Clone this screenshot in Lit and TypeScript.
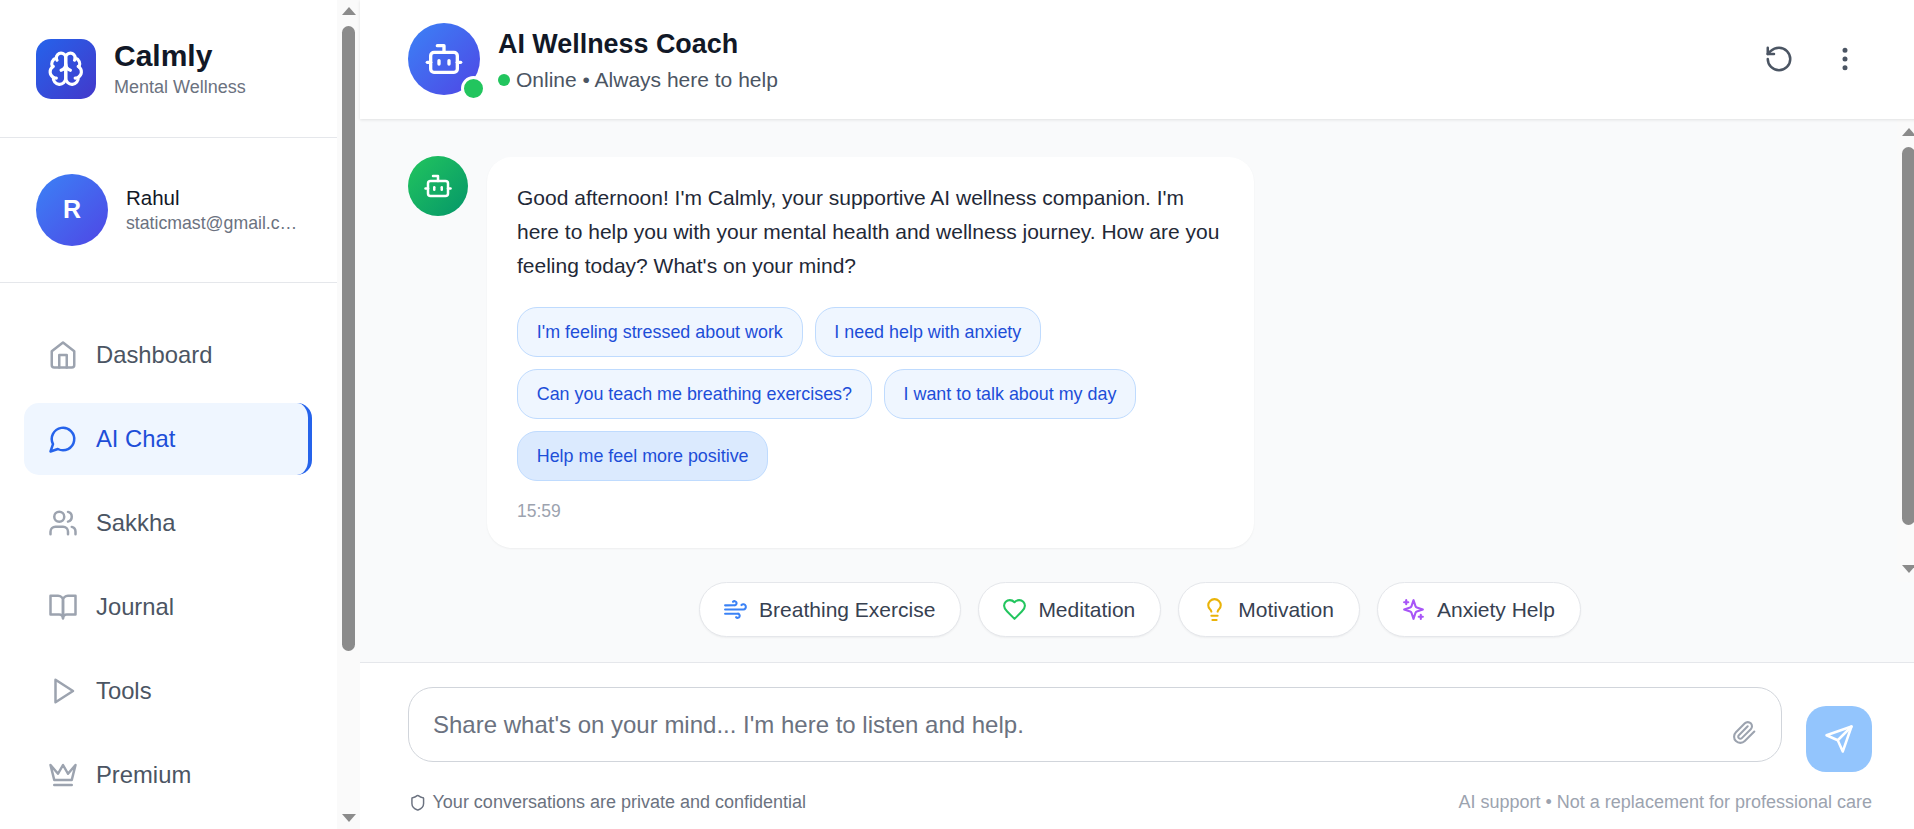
import { LitElement, html, css, svg } from "lit";
import { customElement, property } from "lit/decorators.js";

const ICONS: Record<string, any> = {
  brain: svg`<path d="M12 5a3 3 0 1 0-5.997.125 4 4 0 0 0-2.526 5.77 4 4 0 0 0 .556 6.588A4 4 0 1 0 12 18Z"/><path d="M12 5a3 3 0 1 1 5.997.125 4 4 0 0 1 2.526 5.77 4 4 0 0 1-.556 6.588A4 4 0 1 1 12 18Z"/><path d="M15 13a4.5 4.5 0 0 1-3-4 4.5 4.5 0 0 1-3 4"/><path d="M17.599 6.5a3 3 0 0 0 .399-1.375"/><path d="M6.003 5.125A3 3 0 0 0 6.401 6.5"/><path d="M3.477 10.896a4 4 0 0 1 .585-.396"/><path d="M19.938 10.5a4 4 0 0 1 .585.396"/><path d="M6 18a4 4 0 0 1-1.967-.516"/><path d="M19.967 17.484A4 4 0 0 1 18 18"/>`,
  bot: svg`<path d="M12 8V4H8"/><rect width="16" height="12" x="4" y="8" rx="2"/><path d="M2 14h2"/><path d="M20 14h2"/><path d="M15 13v2"/><path d="M9 13v2"/>`,
  home: svg`<path d="m3 9 9-7 9 7v11a2 2 0 0 1-2 2H5a2 2 0 0 1-2-2z"/><polyline points="9 22 9 12 15 12 15 22"/>`,
  chat: svg`<path d="M7.9 20A9 9 0 1 0 4 16.1L2 22Z"/>`,
  users: svg`<path d="M16 21v-2a4 4 0 0 0-4-4H6a4 4 0 0 0-4 4v2"/><circle cx="9" cy="7" r="4"/><path d="M22 21v-2a4 4 0 0 0-3-3.87"/><path d="M16 3.13a4 4 0 0 1 0 7.75"/>`,
  book: svg`<path d="M2 3h6a4 4 0 0 1 4 4v14a3 3 0 0 0-3-3H2z"/><path d="M22 3h-6a4 4 0 0 0-4 4v14a3 3 0 0 1 3-3h7z"/>`,
  play: svg`<polygon points="6 3 20 12 6 21 6 3"/>`,
  crown: svg`<path d="m2 4 3 12h14l3-12-6 7-4-7-4 7-6-7zm3 16h14"/>`,
  rotate: svg`<path d="M3 12a9 9 0 1 0 9-9 9.75 9.75 0 0 0-6.74 2.74L3 8"/><path d="M3 3v5h5"/>`,
  more: svg`<circle cx="12" cy="12" r="1"/><circle cx="12" cy="5" r="1"/><circle cx="12" cy="19" r="1"/>`,
  wind: svg`<path d="M17.7 7.7a2.5 2.5 0 1 1 1.8 4.3H2"/><path d="M9.6 4.6A2 2 0 1 1 11 8H2"/><path d="M12.6 19.4A2 2 0 1 0 14 16H2"/>`,
  heart: svg`<path d="M19 14c1.49-1.46 3-3.21 3-5.5A5.5 5.5 0 0 0 16.5 3c-1.76 0-3 .5-4.5 2-1.5-1.5-2.74-2-4.5-2A5.5 5.5 0 0 0 2 8.5c0 2.3 1.5 4.05 3 5.5l7 7Z"/>`,
  bulb: svg`<path d="M15 14c.2-1 .7-1.7 1.5-2.5 1-.9 1.5-2.2 1.5-3.5A6 6 0 0 0 6 8c0 1 .2 2.2 1.5 3.5.7.7 1.3 1.5 1.5 2.5"/><path d="M9 18h6"/><path d="M10 22h4"/>`,
  sparkles: svg`<path d="m12 3-1.912 5.813a2 2 0 0 1-1.275 1.275L3 12l5.813 1.912a2 2 0 0 1 1.275 1.275L12 21l1.912-5.813a2 2 0 0 1 1.275-1.275L21 12l-5.813-1.912a2 2 0 0 1-1.275-1.275L12 3Z"/><path d="M5 3v4"/><path d="M19 17v4"/><path d="M3 5h4"/><path d="M17 19h4"/>`,
  clip: svg`<path d="m21.44 11.05-9.19 9.19a6 6 0 0 1-8.49-8.49l8.57-8.57A4 4 0 1 1 18 8.84l-8.59 8.57a2 2 0 0 1-2.83-2.83l8.49-8.48"/>`,
  send: svg`<path d="m22 2-7 20-4-9-9-4Z"/><path d="M22 2 11 13"/>`,
  shield: svg`<path d="M20 13c0 5-3.5 7.5-7.66 8.95a1 1 0 0 1-.67-.01C7.5 20.5 4 18 4 13V6a1 1 0 0 1 1-1c2 0 4.5-1.2 6.24-2.72a1.17 1.17 0 0 1 1.52 0C14.51 3.81 17 5 19 5a1 1 0 0 1 1 1z"/>`,
};

const icon = (name: string, cls = "") => html`<svg class="ic ${cls}" viewBox="0 0 24 24" fill="none" stroke="currentColor" stroke-width="2" stroke-linecap="round" stroke-linejoin="round">${ICONS[name]}</svg>`;

@customElement("fake-scrollbar")
class FakeScrollbar extends LitElement {
  @property({ type: Number }) thumb = 100;
  @property({ type: Number }) top = 7;
  @property({ type: Number }) gap = 11;
  static styles = css`
    :host { display: flex; flex-direction: column; align-items: center; width: 23px; flex: none; background: #fafafa; box-sizing: border-box; }
    .up { width: 0; height: 0; border-left: 7.5px solid transparent; border-right: 7.5px solid transparent; border-bottom: 8px solid #8b8b8b; }
    .down { width: 0; height: 0; border-left: 7.5px solid transparent; border-right: 7.5px solid transparent; border-top: 8px solid #8b8b8b; margin-top: auto; }
    .thumb { width: 13px; background: #8b8b8b; border-radius: 7px; }
  `;
  render() {
    return html`
      <div class="up" style="margin-top:${this.top}px"></div>
      <div class="thumb" style="margin-top:${this.gap}px;height:${this.thumb}px"></div>
      <div class="down" style="margin-bottom:${this.top}px"></div>`;
  }
}

@customElement("app-root")
class AppRoot extends LitElement {
  static styles = css`
    :host { display: block; width: 1914px; height: 829px; overflow: hidden; font-family: "Liberation Sans", Arial, sans-serif; color: #111827; }
    * { box-sizing: border-box; }
    .page { display: flex; width: 1920px; height: 829px; }
    .ic { display: block; flex: none; width: 30px; height: 30px; }

    .side { display: flex; width: 360px; flex: none; height: 829px; }
    .panel { width: 337px; flex: none; background: #fff; overflow: hidden; }
    .brand { display: flex; align-items: center; gap: 18px; height: 138px; padding-left: 36px; border-bottom: 1px solid #e5e7eb; }
    .logo { width: 60px; height: 60px; border-radius: 15px; background: linear-gradient(135deg, #2563eb, #4338ca); display: flex; align-items: center; justify-content: center; color: #fff; }
    .logo .ic { width: 37.5px; height: 37.5px; }
    .brand h1 { margin: 0; font-size: 30px; line-height: 37.5px; font-weight: 700; color: #111827; }
    .brand p { margin: 0; font-size: 18px; line-height: 25px; color: #6b7280; }
    .profile { display: flex; align-items: center; gap: 18px; height: 145px; padding-left: 36px; border-bottom: 1px solid #e5e7eb; }
    .av { width: 72px; height: 72px; border-radius: 50%; flex: none; background: linear-gradient(135deg, #3b82f6, #4f46e5); display: flex; align-items: center; justify-content: center; color: #fff; position: relative; }
    .av.letter { font-size: 25px; font-weight: 700; padding-bottom: 2px; }
    .who { width: 178px; }
    .who .n { font-size: 20.5px; line-height: 27.5px; color: #111827; }
    .who .e { font-size: 17.7px; line-height: 25px; color: #6b7280; white-space: nowrap; overflow: hidden; text-overflow: ellipsis; }
    nav { display: flex; flex-direction: column; gap: 12px; padding: 36px 25px 0 24px; }
    .item { display: flex; align-items: center; gap: 18px; height: 72px; padding-left: 24px; border-radius: 15px; font-size: 23.8px; color: #4b5563; }
    .item .ic { color: #9ca3af; }
    .item.on { background: #eff6ff; color: #1d4ed8; border-right: 4px solid #2563eb; }
    .item.on .ic { color: #2563eb; }

    .main { width: 1560px; flex: none; display: flex; flex-direction: column; height: 829px; }
    header { position: relative; z-index: 1; height: 119px; flex: none; display: flex; align-items: center; padding: 0 48px; background: #fff; box-shadow: 0 1px 3px rgba(0,0,0,.1); }
    header .av { margin: 0 18px 1px 0; }
    header .av .ic { width: 40px; height: 40px; }
    .dot { position: absolute; right: -6.25px; bottom: -6.25px; width: 25px; height: 25px; border-radius: 50%; background: #22c55e; border: 3.75px solid #fff; }
    .head-text { margin-top: 2.5px; }
    .title { font-size: 26.9px; line-height: 35px; font-weight: 700; color: #111827; }
    .status { display: flex; align-items: center; gap: 6px; margin-top: 2.5px; font-size: 21px; line-height: 30px; color: #4b5563; }
    .status i { width: 12px; height: 12px; border-radius: 50%; background: #22c55e; }
    .actions { margin-left: auto; display: flex; gap: 12px; color: #4b5563; margin-bottom: 1px; }
    .actions div { width: 54px; height: 54px; display: flex; align-items: center; justify-content: center; }

    .scroll { flex: none; height: 463px; display: flex; background: #f9fafb; }
    .msgs { flex: 1; padding: 37px 0 0 48px; display: flex; gap: 19px; align-items: flex-start; }
    .msgav { width: 60px; height: 60px; border-radius: 50%; flex: none; background: linear-gradient(135deg, #22c55e, #059669); display: flex; align-items: center; justify-content: center; color: #fff; }
    .bubble { width: 767px; background: #fff; border-radius: 25px; padding: 24px 30px 24px; box-shadow: 0 1px 2px rgba(0,0,0,.05); margin-top: 1px; }
    .bubble p { margin: 0; font-size: 21px; line-height: 34px; color: #1f2937; }
    .sugg { display: flex; flex-wrap: wrap; gap: 12px; margin-top: 24px; width: 640px; }
    .s { height: 50px; padding: 0 18.75px; display: flex; align-items: center; border-radius: 20px; background: #eff6ff; border: 1px solid #bfdbfe; color: #1d4ed8; font-size: 17.9px; }
    .s.hot { background: #dbeafe; }
    .time { margin-top: 18px; font-size: 17.5px; line-height: 25px; color: #9ca3af; }

    .quick { flex: none; height: 80px; display: flex; justify-content: center; gap: 17px; background: #f9fafb; }
    .q { height: 55px; display: flex; align-items: center; gap: 11px; padding: 0 25px 0 23px; background: #fff; border: 1px solid #e5e7eb; border-radius: 28px; font-size: 21px; color: #374151; box-shadow: 0 1px 2px rgba(0,0,0,.05); }
    .q .ic { width: 25px; height: 25px; }
    .blue { color: #3b82f6; } .green { color: #22c55e; } .yellow { color: #eab308; } .purple { color: #a855f7; }

    .foot { flex: 1; background: #fff; border-top: 1px solid #e5e7eb; padding: 24px 48px 0; }
    .row { display: flex; align-items: flex-end; gap: 24px; }
    .field { flex: 1; position: relative; margin-bottom: 10px; }
    .field input { display: block; width: 100%; height: 75px; border: 1px solid #d1d5db; border-radius: 25px; padding: 0 75px 0 24px; font: 24px "Liberation Sans", Arial, sans-serif; background: #fff; outline: none; }
    .field input::placeholder { color: #6b7280; opacity: 1; }
    .clip { position: absolute; right: 25px; top: 33px; color: #9ca3af; }
    .clip .ic { width: 25px; height: 25px; }
    .sendb { width: 66px; height: 66px; flex: none; border-radius: 20px; background: #93c5fd; display: flex; align-items: center; justify-content: center; color: #fff; }
    .meta { display: flex; justify-content: space-between; align-items: center; margin-top: 18px; font-size: 18px; line-height: 25px; color: #6b7280; }
    .meta span { display: flex; align-items: center; gap: 6px; }
    .meta .ic { width: 17.5px; height: 17.5px; margin-left: 1px; }
    .meta .r { color: #9ca3af; }
  `;

  render() {
    const nav = [["home","Dashboard"],["chat","AI Chat"],["users","Sakkha"],["book","Journal"],["play","Tools"],["crown","Premium"]];
    const sugg = ["I'm feeling stressed about work","I need help with anxiety","Can you teach me breathing exercises?","I want to talk about my day","Help me feel more positive"];
    const quick = [["wind","Breathing Exercise","blue"],["heart","Meditation","green"],["bulb","Motivation","yellow"],["sparkles","Anxiety Help","purple"]];
    return html`<div class="page">
      <aside class="side">
        <div class="panel">
          <div class="brand">
            <div class="logo">${icon("brain")}</div>
            <div><h1>Calmly</h1><p>Mental Wellness</p></div>
          </div>
          <div class="profile">
            <div class="av letter">R</div>
            <div class="who"><div class="n">Rahul</div><div class="e">staticmast@gmail.com</div></div>
          </div>
          <nav>
            ${nav.map(([i,t]) => html`<div class="item ${t === "AI Chat" ? "on" : ""}">${icon(i)}<span>${t}</span></div>`)}
          </nav>
        </div>
        <fake-scrollbar .thumb=${625} .top=${7} .gap=${11}></fake-scrollbar>
      </aside>
      <main class="main">
        <header>
          <div class="av">${icon("bot")}<span class="dot"></span></div>
          <div class="head-text">
            <div class="title">AI Wellness Coach</div>
            <div class="status"><i></i><span>Online • Always here to help</span></div>
          </div>
          <div class="actions"><div>${icon("rotate")}</div><div>${icon("more")}</div></div>
        </header>
        <div class="scroll">
          <div class="msgs">
            <div class="msgav">${icon("bot")}</div>
            <div class="bubble">
              <p>Good afternoon! I'm Calmly, your supportive AI wellness companion. I'm here to help you with your mental health and wellness journey. How are you feeling today? What's on your mind?</p>
              <div class="sugg">${sugg.map((s, i) => html`<div class="s ${i === 4 ? "hot" : ""}">${s}</div>`)}</div>
              <div class="time">15:59</div>
            </div>
          </div>
          <fake-scrollbar .thumb=${378} .top=${9} .gap=${11}></fake-scrollbar>
        </div>
        <div class="quick">
          ${quick.map(([i,t,c]) => html`<div class="q">${icon(i, c)}<span>${t}</span></div>`)}
        </div>
        <div class="foot">
          <div class="row">
            <div class="field">
              <input placeholder="Share what's on your mind... I'm here to listen and help." />
              <div class="clip">${icon("clip")}</div>
            </div>
            <div class="sendb">${icon("send")}</div>
          </div>
          <div class="meta">
            <span>${icon("shield")}Your conversations are private and confidential</span>
            <span class="r">AI support • Not a replacement for professional care</span>
          </div>
        </div>
      </main>
    </div>`;
  }
}
